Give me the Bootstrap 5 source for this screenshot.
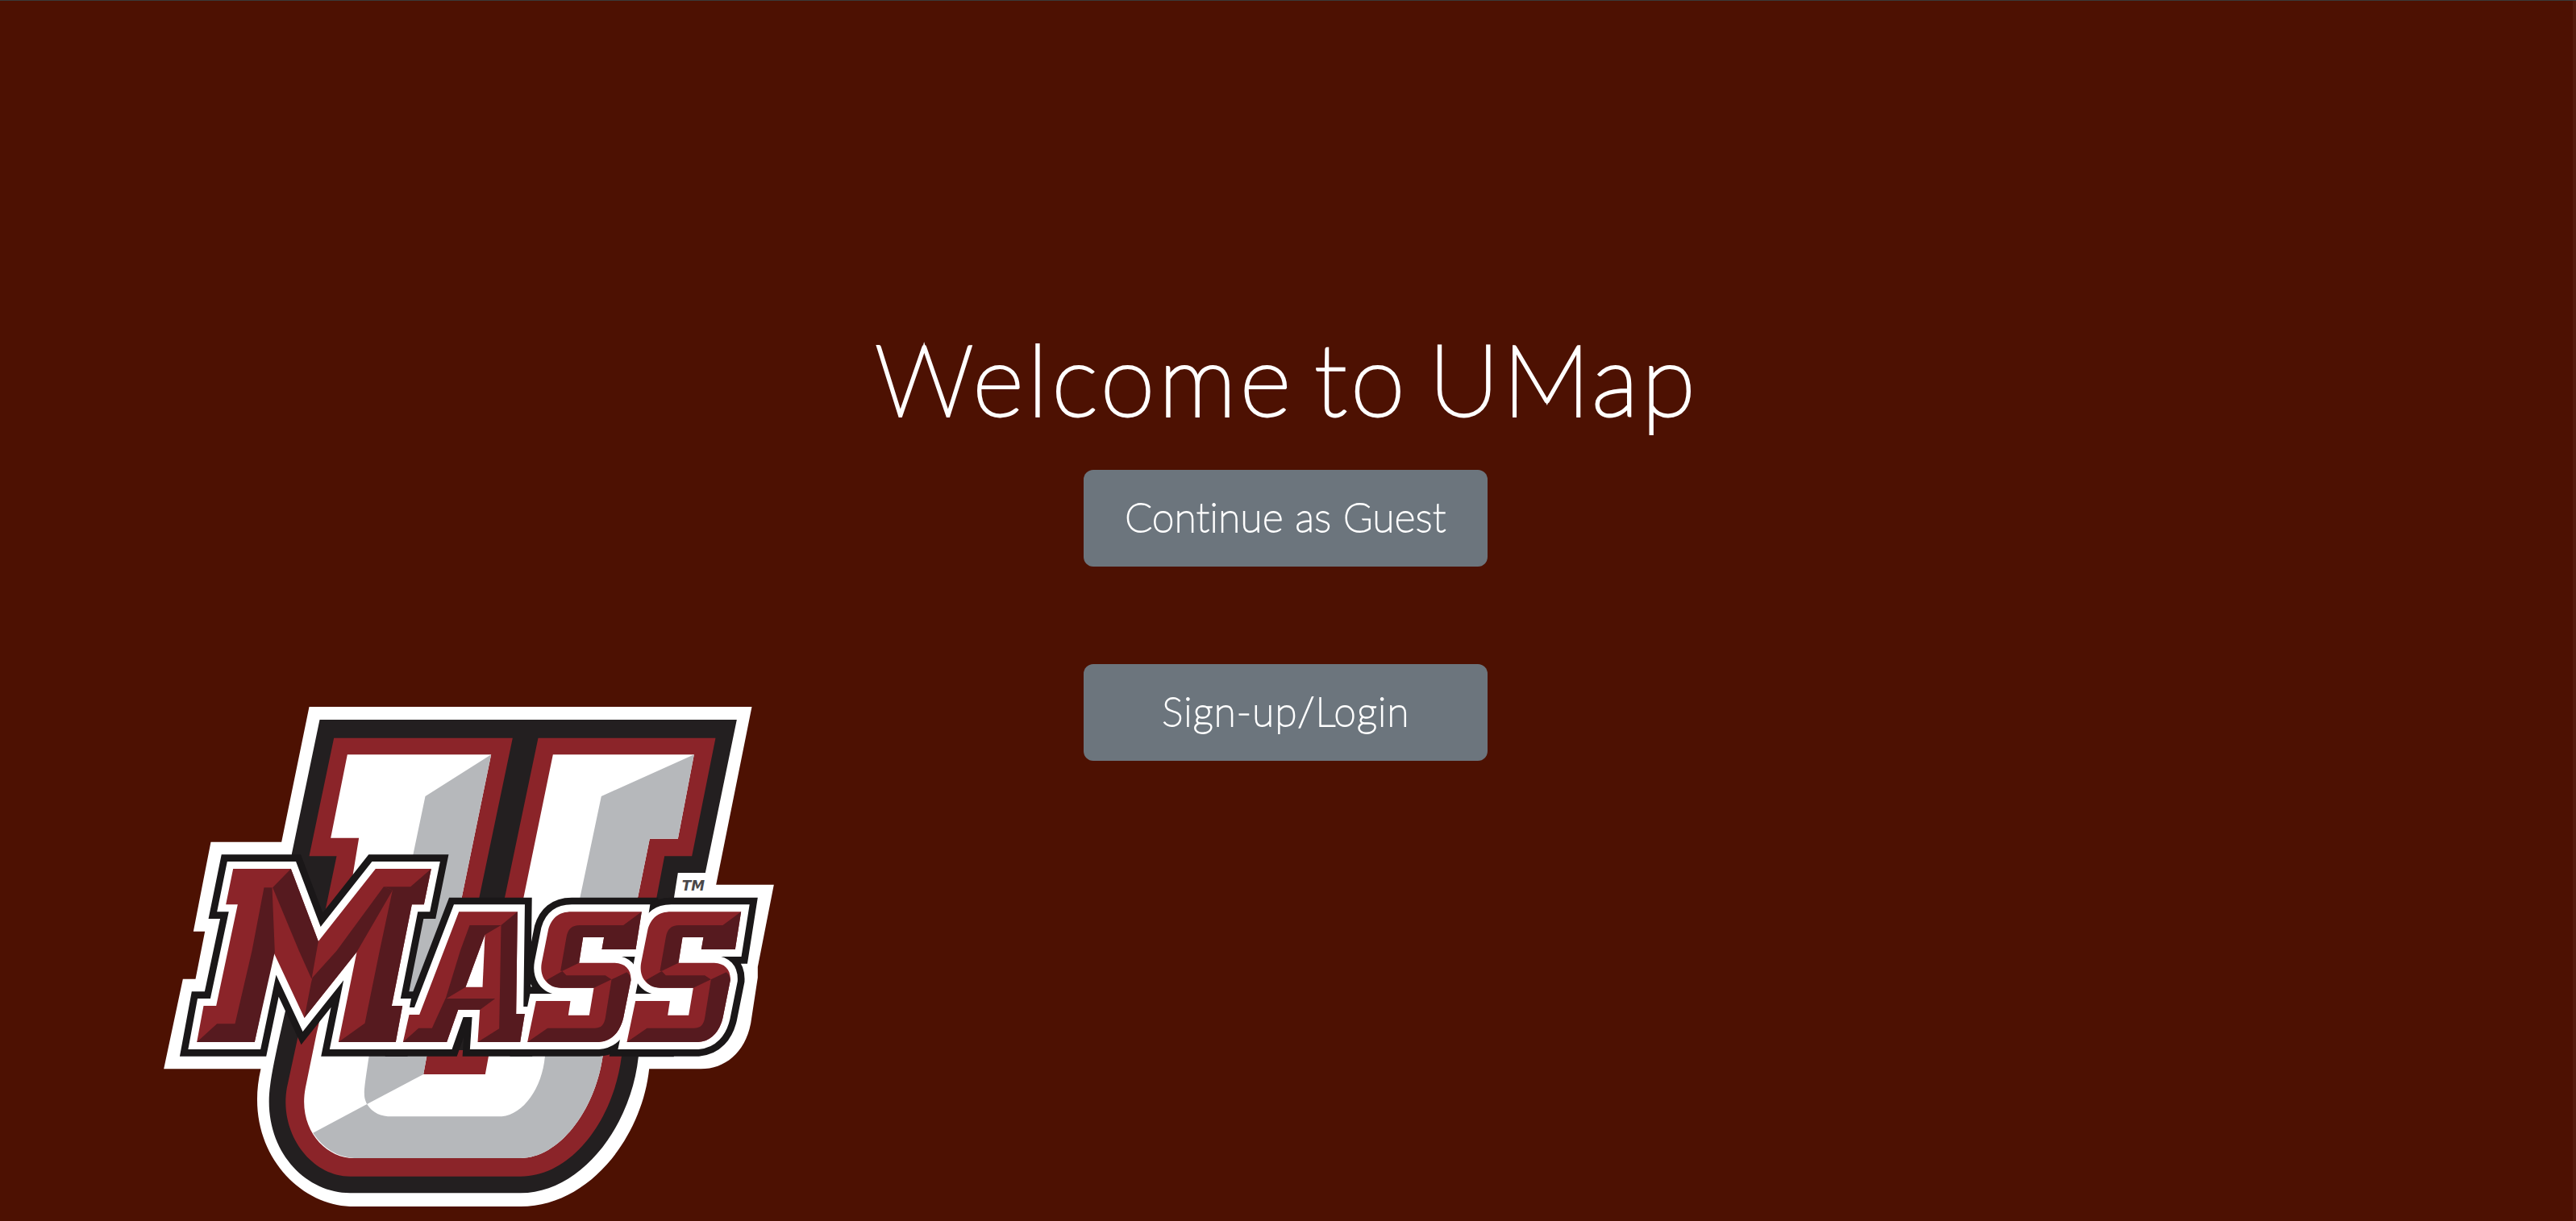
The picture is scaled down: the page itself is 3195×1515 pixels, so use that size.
<!DOCTYPE html>
<html lang="en">
<head>
<meta charset="utf-8">
<meta name="viewport" content="width=device-width, initial-scale=1">
<title>UMap</title>
<link href="https://cdn.jsdelivr.net/npm/bootstrap@5.3.0/dist/css/bootstrap.min.css" rel="stylesheet">
<style>
body { background: #4d1102; font-family: Lato, "Open Sans", sans-serif; font-weight: 200; border-top: 1px solid #3a3a3a; }
.page { min-height: calc(100vh - 1px); padding-right: 2px; border-right: 4px solid #561c0d; }
.logo { width: 757px; height: 620px; margin: 0 0 18px 203px; }
.hero { padding-top: 391px; font-variant-ligatures: none; }
.hero-title { font-size: 122px; font-weight: 200; line-height: 154px; margin: 0 0 37px; padding-left: 3px; letter-spacing: 4.8px; word-spacing: -15px; -webkit-text-stroke: 3.8px #fff; }
.hero-name { letter-spacing: 4.2px; }
.hero-actions { width: 501px; gap: 121px; }
.btn-hero { height: 120px; font-size: 49.5px; font-weight: 200; line-height: 1; border-radius: 12px; --bs-btn-bg: #6c757d; padding: 0 0 3px; letter-spacing: .45px; -webkit-text-stroke: 1.8px #fff; }
.btn-login { letter-spacing: 1.2px; padding-left: 1px; }
</style>
</head>
<body>
<main class="page row g-0">
  <div class="col-4 d-flex align-items-end">
    <svg class="logo" viewBox="42 52 2270 1860" role="img" aria-label="UMass">
      <defs>
        <path id="m" d="M300 655H515L617 925L830 655H1037L1010 788H965L890 1165H930L905 1300H692L760 965L565 1210L450 965L380 1300H165L190 1165H237L317 788H273Z"/>
        <path id="a" d="M1140 815H1358L1353 1195H1385L1368 1300H1210L1218 1180H1137L1095 1300H932L955 1198H993Z"/>
        <path id="s" d="M1820 815L1798 955H1672L1680 910H1602L1587 1005H1720C1760 1007 1782 1030 1780 1070L1752 1210C1740 1260 1710 1297 1660 1300H1395L1427 1147H1555L1547 1200H1625L1642 1098H1520C1460 1095 1440 1050 1448 1005L1473 880C1485 840 1510 815 1560 815Z"/>
        <g id="letters"><use href="#m"/><use href="#a"/><use href="#s"/><use href="#s" x="370"/></g>
        <path id="gaps" d="M1602 910H1680L1672 955H1700L1690 1005H1587ZM1530 1098H1642L1625 1200H1547L1555 1147H1480Z"/>
        <g id="sdark">
          <path d="M1820 815L1752 865H1590C1560 865 1545 880 1540 910L1518 1035L1525 1035L1587 1005L1602 910H1680L1672 955H1798Z"/>
          <path d="M1465 1070L1525 1036L1540 1052H1685L1708 1067L1642 1098H1520C1490 1098 1475 1088 1465 1070Z"/>
          <path d="M1765 1040L1708 1067L1685 1210C1680 1235 1670 1248 1645 1248H1470L1395 1300H1660C1710 1297 1740 1260 1752 1210L1780 1070Q1780 1052 1765 1040Z"/>
        </g>
      </defs>
      <path fill="#fff" d="M583 52H2230L2097 714H2312L2252 1020V1060L2226 1230C2205 1340 2130 1400 2040 1400H1848C1820 1660 1620 1912 1370 1912H735C535 1905 335 1690 403 1400H42L113 1065H160L195 888H152L217 555H480Z"/>
      <path fill="#231f20" d="M622 100H2174L2057 670H1955L1940 765V1355H1808C1780 1620 1590 1862 1370 1862H735C560 1862 405 1690 438 1460Q445 1395 500 1160L518 600Z"/>
      <path fill="#8b2429" d="M675 168H1340L1215 765L1100 1330H1186L1310 765L1435 168H2095L2007 608H1905L1875 765L1745 1355C1715 1590 1560 1800 1370 1800H735C590 1800 470 1640 500 1470L645 800L685 608H583Z"/>
      <path fill="#fff" d="M725 230H1260L1150 765L1020 1355L1008 1420H1238L1250 1355L1380 765L1490 230H2015L1955 543H1850L1805 765L1675 1355C1645 1560 1510 1732 1370 1732H750C640 1732 540 1620 569 1470L610 1270L745 680L768 540H663Z"/>
      <g fill="#b6b8bb">
        <path d="M1260 230L1015 385L970 600L805 1355C785 1490 783 1500 798 1531L1008 1420L1020 1355L1150 765Z"/>
        <path d="M798 1531C820 1565 850 1577 890 1577H1300C1380 1570 1450 1470 1460 1355L1590 765L1670 385L2015 230L1955 543H1850L1805 765L1675 1355C1645 1560 1510 1732 1370 1732H750Q655 1725 597 1638Z"/>
      </g>
      <use href="#letters" fill="#1a1718" stroke="#1a1718" stroke-width="106" stroke-miterlimit="3"/>
      <use href="#letters" fill="#fff" stroke="#fff" stroke-width="54" stroke-miterlimit="3"/>
      <g fill="#fff"><use href="#gaps"/><use href="#gaps" x="370"/></g>
      <use href="#letters" fill="#8b2429"/>
      <path fill="#fff" d="M1237 900L1228 1095H1165Z"/>
      <g fill="#561a1f">
        <path d="M415 725H445L455 965L380 1300H165L240 1232H307L370 960Z"/>
        <path d="M515 655L447 725L545 960L592 1065L617 925Z"/>
        <path d="M860 722L893 735L760 965L565 1210L590 1080L595 1060L685 960Z"/>
        <path d="M1037 655L960 722H860L893 735L845 960L790 1230L692 1300H905L930 1165H890L965 788H1010Z"/>
        <path d="M1180 865H1297L1237 900L1165 1095L1090 1140L1145 960Z"/>
        <path d="M1358 815L1297 865L1290 1250L1210 1300H1368L1385 1195H1353Z"/>
        <path d="M1090 1138H1275L1218 1180H1137L1095 1300H932L990 1248H1040Z"/>
        <use href="#sdark"/><use href="#sdark" x="370"/>
      </g>
      <text x="1970" y="735" font-family="DejaVu Sans" font-weight="700" font-style="italic" font-size="51" textLength="85" lengthAdjust="spacingAndGlyphs" fill="#4a4748">TM</text>
    </svg>
  </div>
  <div class="hero col-4 d-flex flex-column align-items-center text-center text-white">
    <h1 class="hero-title text-nowrap">Welcome to <span class="hero-name">UMap</span></h1>
    <div class="hero-actions d-grid">
      <button class="btn btn-secondary btn-hero border-0" type="button">Continue as Guest</button>
      <button class="btn btn-secondary btn-hero btn-login border-0" type="button">Sign-up/Login</button>
    </div>
  </div>
</main>
<script src="https://cdn.jsdelivr.net/npm/bootstrap@5.3.0/dist/js/bootstrap.bundle.min.js"></script>
</body>
</html>
